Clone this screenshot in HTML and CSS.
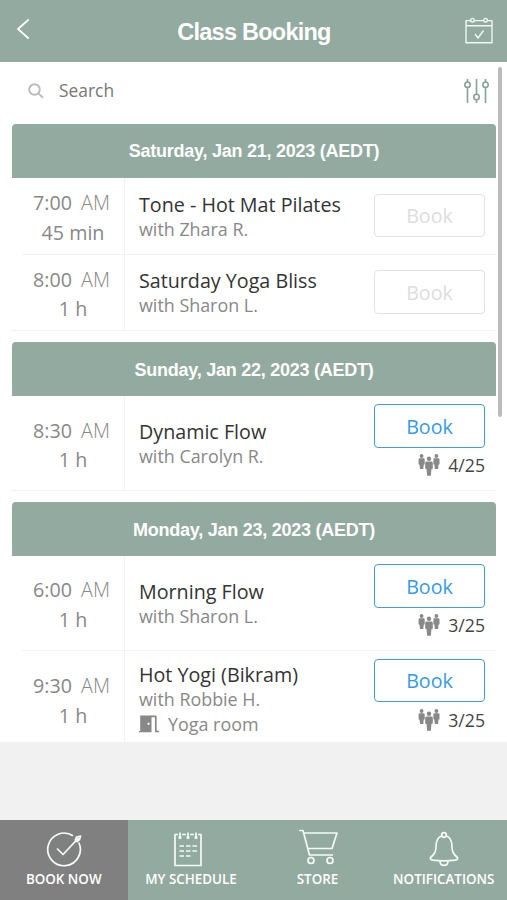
FILE: index.html
```html
<!DOCTYPE html>
<html lang="en">
<head>
<meta charset="utf-8">
<meta name="viewport" content="width=device-width, initial-scale=1">
<title>Class Booking</title>
<link rel="stylesheet" href="styles.css">
</head>
<body>
<svg class="sprite" aria-hidden="true">
  <symbol id="people" viewBox="0 0 22 22">
    <circle cx="3.600" cy="2" r="1.900"/><circle cx="18.400" cy="2" r="1.900"/><circle cx="11" cy="4.800" r="2.200"/>
    <path d="M1.500 4.200h4.200q1 0 1 1v5l-1 .6-.4 4.200h-3.300l-.4-4.200-1-.6V5.200q0-1 .9-1zM16.300 4.200h4.200q1 0 1 1v5l-1 .6-.4 4.200h-3.300l-.4-4.200-1-.6V5.200q0-1 .9-1zM8.600 7.500h4.800q1.400 0 1.400 1.400v5.600l-1.400.7-.5 6.500H9.100l-.5-6.500-1.400-.7V8.900q0-1.400 1.400-1.400z"/>
  </symbol>
</svg>
<div class="app">
  <header class="topbar">
    <svg class="back" viewBox="0 0 14 22"><path d="M12.700 1.500 2 11l10.700 9.500"/></svg>
    <h1>Class Booking</h1>
    <svg class="calendar" viewBox="0 0 28 28"><path d="M5.500 3.600H1v22.200h26V3.600h-4.500M9.500 3.600h9M1 8.800h26M10 17l3 4 5.500-7.500"/><circle cx="7.500" cy="3.200" r="1.800"/><circle cx="20.500" cy="3.200" r="1.800"/></svg>
  </header>
  <main class="content">
    <div class="search">
      <svg class="glass" viewBox="0 0 16 16"><circle cx="6.500" cy="6.500" r="5.300"/><path d="M10.400 10.400l4.600 4.400"/></svg>
      <span>Search</span>
      <svg class="filter" viewBox="0 0 26 26"><path d="M3.500 1v3M3.500 9.500V25M12.500 1v15M12.500 22v3M21.500 1v3M21.500 9.500V25"/><circle cx="3.500" cy="6.700" r="2.700"/><circle cx="12.500" cy="19" r="2.700"/><circle cx="21.500" cy="6.700" r="2.700"/></svg>
    </div>

    <section class="day">
      <h2>Saturday, Jan 21, 2023 (AEDT)</h2>
      <article class="row">
        <div class="time"><span>7:00 <i>AM</i></span><span>45 min</span></div>
        <div class="info"><h3>Tone - Hot Mat Pilates</h3><p>with Zhara R.</p></div>
        <div class="action"><button class="book" disabled>Book</button></div>
      </article>
      <article class="row">
        <div class="time"><span>8:00 <i>AM</i></span><span>1 h</span></div>
        <div class="info"><h3>Saturday Yoga Bliss</h3><p>with Sharon L.</p></div>
        <div class="action"><button class="book" disabled>Book</button></div>
      </article>
    </section>

    <section class="day">
      <h2>Sunday, Jan 22, 2023 (AEDT)</h2>
      <article class="row open">
        <div class="time"><span>8:30 <i>AM</i></span><span>1 h</span></div>
        <div class="info"><h3>Dynamic Flow</h3><p>with Carolyn R.</p></div>
        <div class="action"><button class="book">Book</button><div class="count"><svg><use href="#people"/></svg>4/25</div></div>
      </article>
    </section>

    <section class="day">
      <h2>Monday, Jan 23, 2023 (AEDT)</h2>
      <article class="row open">
        <div class="time"><span>6:00 <i>AM</i></span><span>1 h</span></div>
        <div class="info"><h3>Morning Flow</h3><p>with Sharon L.</p></div>
        <div class="action"><button class="book">Book</button><div class="count"><svg><use href="#people"/></svg>3/25</div></div>
      </article>
      <article class="row open tall">
        <div class="time"><span>9:30 <i>AM</i></span><span>1 h</span></div>
        <div class="info"><h3>Hot Yogi (Bikram)</h3><p>with Robbie H.</p>
          <p class="room"><svg viewBox="0 0 20 20"><path fill-rule="evenodd" d="M1.200 1.500H12.500v16.800H0v-1.200h1.200zM8.500 8.800v2h2v-2z"/><path d="M12 2.300h4.800v15.200H20" fill="none" stroke="#888" stroke-width="1.700"/></svg>Yoga room</p></div>
        <div class="action"><button class="book">Book</button><div class="count"><svg><use href="#people"/></svg>3/25</div></div>
      </article>
    </section>
    <div class="scrollbar"></div>
  </main>

  <nav class="tabs">
    <a class="active"><svg viewBox="0 0 36 36"><path d="M27 4.800A16.300 16.300 0 1 0 32.800 11.500"/><path d="M11 17.500l6 6L33 6.500M29 9.500l1.500-3.500 4-1-1 3.500-3 2.500"/></svg><span>BOOK NOW</span></a>
    <a><svg class="pad" viewBox="0 0 36 36"><path d="M8 3.500H5v31h26v-31h-3M12 3.500h4M20 3.500h4M10 1.500v6M18 1.500v6M26 1.500v6"/><circle cx="10" cy="6.500" r=".8"/><circle cx="18" cy="6.500" r=".8"/><circle cx="26" cy="6.500" r=".8"/><path d="M9.500 15h4.500M16 15h4.500M22.500 15H27M9.500 20h4.500M16 20h4.500M22.500 20H27M9.500 25h4.500M16 25h4.500"/></svg><span>MY SCHEDULE</span></a>
    <a><svg class="cart" viewBox="0 0 40 36"><path d="M1 1.500h4L11.500 26H35M6 4h33l-5 15.500H10"/><circle cx="13" cy="31.500" r="3"/><circle cx="32" cy="31.500" r="3"/></svg><span>STORE</span></a>
    <a><svg viewBox="0 0 36 36"><path d="M15.500 5C11 6.500 10 11 10 16c0 5-1.500 7.500-5 10-1.500 1.300-.5 2.800 2 3.200 7 .9 15 .9 22 0 2.500-.4 3.500-1.900 2-3.200C27.500 23.500 26 21 26 16c0-5-1-9.500-5.500-11"/><circle cx="18" cy="4" r="2.300"/><path d="M14 30.300c0 5.500 8 5.500 8 0"/></svg><span>NOTIFICATIONS</span></a>
  </nav>
</div>
</body>
</html>
```

FILE: styles.css
```css
* { box-sizing: border-box; }
body { margin: 0; background: #f1f1f1; font-family: "Open Sans", sans-serif; color: #333; }
h1, h2, h3, p { margin: 0; font-weight: 400; }
svg { fill: none; stroke-linejoin: round; flex: none; }
.sprite { display: none; }
.app { width: 507px; height: 900px; display: flex; flex-direction: column; overflow: hidden; }

.topbar { height: 61.500px; flex: none; background: #92aa9f; display: flex; align-items: center; justify-content: space-between; padding: 0 14px 0 16px; }
.topbar h1 { font: 700 23.500px/28px "Liberation Sans", sans-serif; letter-spacing: -.75px; color: #fff; padding: 3px 0 0 13px; }
.back { width: 14px; height: 22px; stroke: #fff; stroke-width: 1.700; margin-bottom: 4px; }
.calendar { width: 28px; height: 28px; stroke: #eff8f4; stroke-width: 1.400; }

.content { position: relative; height: 680px; flex: none; overflow: hidden; background: #fff; padding: 0 11px 0 12px; }
.search { height: 62.500px; display: flex; align-items: center; padding: 0 6px 5px 16px; color: #777; font-size: 17.400px; }
.glass { width: 16px; height: 16px; stroke: #bbb; stroke-width: 1.900; margin: 2px 15px 0 0; }
.filter { width: 26px; height: 26px; margin: 1px 0 0 auto; stroke: #86a195; stroke-width: 1.600; }

.day { margin-bottom: 11.300px; }
.day h2 { height: 54px; background: #92aa9f; border-radius: 4px 4px 0 0; color: #fff; text-align: center; font: 700 18px/56px "Liberation Sans", sans-serif; letter-spacing: -.25px; }
.day:first-of-type h2 { line-height: 55px; }
.row { height: 76.500px; display: flex; align-items: stretch; background: linear-gradient(#eff3f2, #eff3f2) 10px 100% / 100% 1px no-repeat; }
.row:last-child { background-position: 0 100%; }
.row.open { height: 94.500px; }
.row.tall { height: 97px; }
.time { width: 113px; flex: none; border-right: 1px solid #f0f3f2; display: flex; flex-direction: column; justify-content: center; align-items: center; padding: 3px 0 0 10px; font-size: 19.700px; line-height: 29.500px; color: #888; }
.time span { white-space: pre; }
.time i { font-style: normal; font-weight: 300; margin-left: 4px; }
.time span:first-child { margin-right: 3px; }
.info { flex: 1; display: flex; flex-direction: column; justify-content: center; padding: 1px 0 0 14px; }
.info h3 { font-size: 19.700px; line-height: 25px; white-space: nowrap; }
.info p { font-size: 17.900px; line-height: 25px; color: #888; }
.tall .info { padding-top: 0; }
.info .room { display: flex; align-items: center; gap: 9px; line-height: 24px; }
.room svg { width: 20px; height: 20px; fill: #888; }
.action { width: 111px; flex: none; margin-right: 11px; display: flex; flex-direction: column; justify-content: center; padding-bottom: 2px; }
.open .action { justify-content: flex-start; padding: 8px 0 0; }
.book { height: 43.500px; border: 1.500px solid #429fdf; border-radius: 4px; background: #fff; color: #369be3; font: 19.700px "Open Sans", sans-serif; padding: 1px 0 0; }
.book:disabled { border-color: #e2e2e2; color: #ddd; }
.count { display: flex; justify-content: flex-end; align-items: center; height: 35px; gap: 8px; font-size: 17.700px; color: #444; }
.count svg { width: 22px; height: 22px; fill: #888; }
.scrollbar { position: absolute; right: 5px; top: 5px; width: 4px; height: 350px; border-radius: 2px; background: #bbb; }

.tabs { height: 80px; margin-top: auto; flex: none; display: grid; grid-template-columns: 127.500px 127px 126px 126.500px; background: #92aa9f; color: #fff; }
.tabs a { display: flex; flex-direction: column; align-items: center; padding-top: 11px; font-weight: 600; font-size: 13.400px; line-height: 18px; white-space: nowrap; }
.tabs svg { width: 36px; height: 36px; stroke: #f4fbf8; stroke-width: 1.700; margin-bottom: 3px; }
.tabs .pad { margin-right: 7px; }
.tabs .cart { width: 40px; margin: -2px 0 5px; }
.tabs .active { background: #808080; }
```
